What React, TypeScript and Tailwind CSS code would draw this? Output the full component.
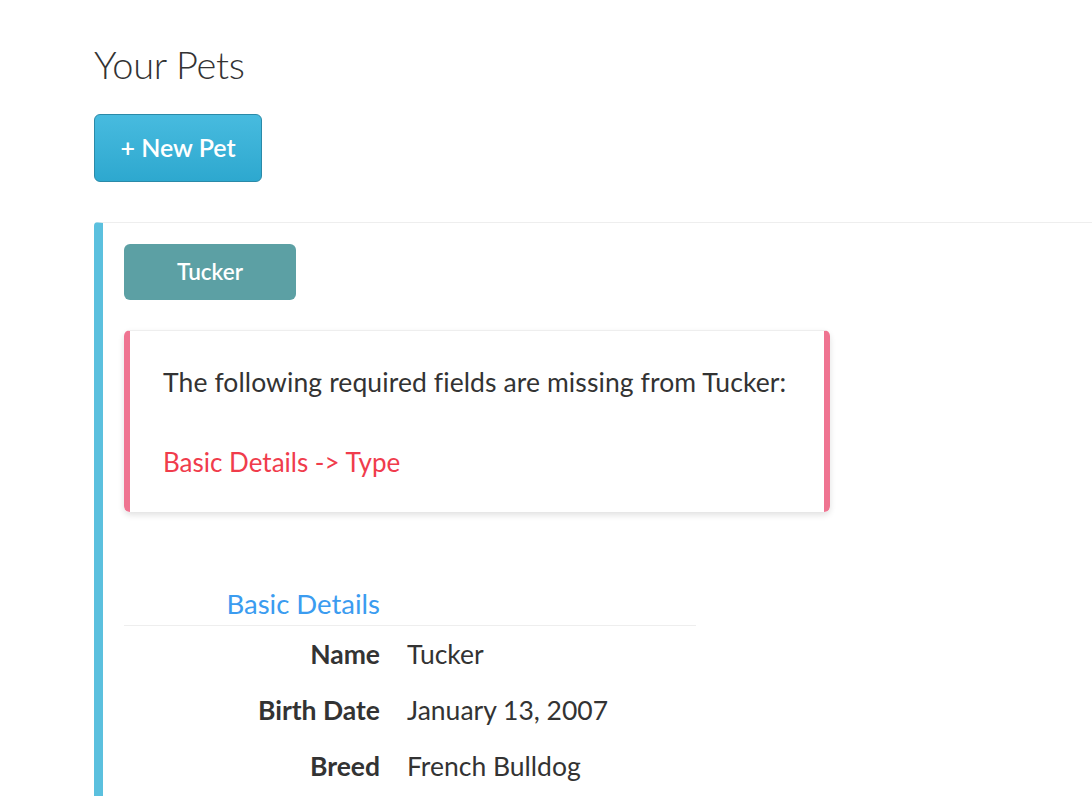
import React from 'react';

const rows = [
    { label: 'Name', value: 'Tucker' },
    { label: 'Birth Date', value: 'January 13, 2007' },
    { label: 'Breed', value: 'French Bulldog' },
];

export default function App() {
    return (
        <div className="min-h-screen bg-white text-[#333] pl-[94px] pt-[38px] overflow-hidden" style={{ fontFamily: 'Lato, "Noto Sans", sans-serif' }}>
            <h1 className="text-[38px] font-light leading-[52px] tracking-[-0.3px]">Your Pets</h1>

            <button className="mt-[24px] w-[168px] h-[68px] rounded-[6px] border border-[#2a8aa8] bg-gradient-to-b from-[#47bbdf] to-[#2da8cf] text-white text-[25px] font-semibold">
                + New Pet
            </button>

            <div className="mt-[40px] border-t border-[#eeeeee] border-l-[9px] border-l-[#5bc0de] rounded-tl-[4px] pl-[21px] pt-[21px] pb-10">
                <button className="w-[172px] h-[56px] rounded-[6px] bg-[#5ca0a4] text-white text-[22.5px] font-semibold">
                    Tucker
                </button>

                <div className="mt-[30px] w-[706px] h-[182px] rounded-[6px] border-t border-[#eeeeee] border-x-[6px] border-x-[#ef7491] shadow-[0_3px_6px_rgba(0,0,0,0.12)] pl-[33px] pt-[36px]">
                    <p className="text-[26.5px] leading-[30px] tracking-[0.1px]">The following required fields are missing from Tucker:</p>
                    <p className="mt-[50px] text-[26px] leading-[30px] text-[#f03c4c]">Basic Details -&gt; Type</p>
                </div>

                <div className="mt-[76px] w-[572px]">
                    <div className="flex border-b border-[#eeeeee] pb-[5px]">
                        <div className="w-[256px] text-right text-[27.5px] leading-[32px] text-[#3b9cf0]">Basic Details</div>
                    </div>
                    <div className="pt-[13px] flex flex-col gap-[26px]">
                        {rows.map((r) => (
                            <div key={r.label} className="flex items-center gap-[27px] text-[26.5px] leading-[30px]">
                                <div className="w-[256px] text-right font-bold">{r.label}</div>
                                <div>{r.value}</div>
                            </div>
                        ))}
                    </div>
                </div>
            </div>
        </div>
    );
}
